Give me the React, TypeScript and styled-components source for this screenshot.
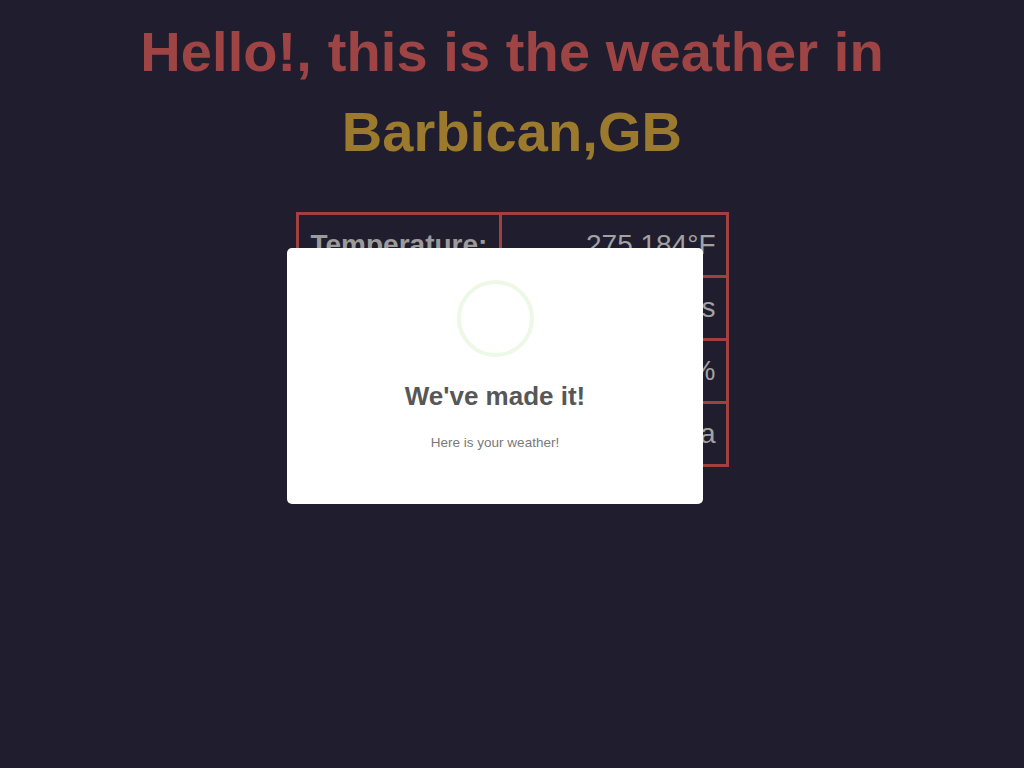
import React from "react";
import styled, { createGlobalStyle } from "styled-components";

const Global = createGlobalStyle`
  html, body {
    margin: 0;
    padding: 0;
    background: #201e2e;
    height: 100%;
  }
  body {
    font-family: "Liberation Sans", Arial, sans-serif;
  }
`;

const Page = styled.main`
  min-height: 768px;
  display: flex;
  flex-direction: column;
  align-items: center;
`;

const Heading = styled.h1`
  margin: 0;
  padding-top: 12px;
  font-size: 56px;
  line-height: 80px;
  font-weight: 700;
  letter-spacing: 0.1px;
  text-align: center;
  color: #9e4444;
`;

const City = styled.span`
  display: block;
  color: #9b7a2e;
`;

const WeatherTable = styled.table`
  margin-top: 40px;
  border-collapse: collapse;
  table-layout: fixed;
  width: 433px;
  border: 3px solid #a0413f;
`;

const Cell = styled.td<{ $label?: boolean }>`
  border: 3px solid #a0413f;
  height: 60px;
  padding: ${(p) => (p.$label ? "0 10px 0 12px" : "0 10px 0 10px")};
  width: ${(p) => (p.$label ? "178px" : "auto")};
  font-size: 28px;
  font-weight: ${(p) => (p.$label ? 700 : 400)};
  text-align: ${(p) => (p.$label ? "left" : "right")};
  color: ${(p) => (p.$label ? "#9b9b9b" : "#a2a2a2")};
  vertical-align: middle;
  white-space: nowrap;
  overflow: hidden;
`;

const Overlay = styled.div`
  position: fixed;
  inset: 0;
`;

const Modal = styled.div`
  position: absolute;
  left: 287px;
  top: 248px;
  width: 416px;
  height: 256px;
  box-sizing: border-box;
  background: #ffffff;
  border-radius: 5px;
  padding-top: 32px;
  display: flex;
  flex-direction: column;
  align-items: center;
  text-align: center;
`;

const SuccessRing = styled.div`
  width: 77px;
  height: 77px;
  box-sizing: border-box;
  border-radius: 50%;
  border: 4px solid rgba(165, 220, 134, 0.2);
`;

const ModalTitle = styled.h2`
  margin: 23px 0 0;
  font-size: 26px;
  line-height: 32px;
  font-weight: 700;
  color: #575757;
`;

const ModalText = styled.p`
  margin: 22px 0 0;
  font-size: 13.5px;
  line-height: 18px;
  color: #797979;
`;

const rows = [
  ["Temperature:", "275.184°F"],
  ["Wind speed:", "4.1 m/s"],
  ["Humidity:", "86 %"],
  ["Pressure:", "1012 hPa"],
];

export default function App() {
  return (
    <>
      <Global />
      <Page>
        <Heading>
          Hello!, this is the weather in
          <City>Barbican,GB</City>
        </Heading>
        <WeatherTable>
          <tbody>
            {rows.map(([k, v]) => (
              <tr key={k}>
                <Cell $label>{k}</Cell>
                <Cell>{v}</Cell>
              </tr>
            ))}
          </tbody>
        </WeatherTable>
      </Page>
      <Overlay>
        <Modal role="dialog">
          <SuccessRing />
          <ModalTitle>We've made it!</ModalTitle>
          <ModalText>Here is your weather!</ModalText>
        </Modal>
      </Overlay>
    </>
  );
}
